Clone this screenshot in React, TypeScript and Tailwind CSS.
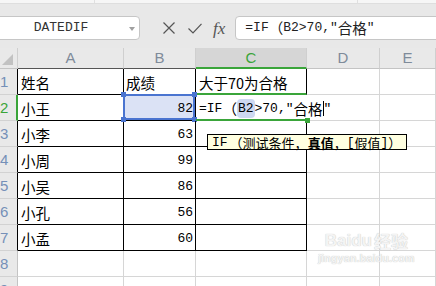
import React from "react"

const rows = [
  ["姓名", "成绩", "大于70为合格"],
  ["小王", "82", ""],
  ["小李", "63", ""],
  ["小周", "99", ""],
  ["小吴", "86", ""],
  ["小孔", "56", ""],
  ["小孟", "60", ""],
  ["", "", ""],
  ["", "", ""],
]

const mono = "font-['Liberation_Mono','DejaVu_Sans_Mono','Noto_Sans_CJK_SC',monospace]"
const cjk = "font-['Noto_Sans_CJK_SC',sans-serif]"

const App = () => {
  return (
    <div className="relative h-[286px] w-[436px] overflow-hidden bg-white font-['Liberation_Sans',sans-serif]">
      {/* top strip */}
      <div className="flex h-[4px] border-b border-b-[#dedede] bg-[#f6f6f6]">
        <div className="w-[95px] border-r border-r-[#e0e0e0]" />
        <div className="w-[263px] border-r border-r-[#e0e0e0]" />
      </div>

      {/* formula bar */}
      <div className="flex h-[44px] items-start bg-[#e8e8e8] pt-[12px]">
        <div className="relative -ml-[4px] flex h-[24px] w-[144px] items-center justify-center rounded-[4px] border border-[#c6c6c6] bg-white">
          <span className={"-ml-[14px] text-[13px] text-[#333] " + mono}>DATEDIF</span>
          <svg className="absolute right-[4px] top-[10px]" width="6" height="4" viewBox="0 0 6 4">
            <path d="M0 0h6L3 4z" fill="#a0a0a0" />
          </svg>
        </div>
        <div className="ml-[23px] flex h-[24px] items-center">
          <svg width="12" height="12" viewBox="0 0 12 12">
            <path d="M0.5 0.5L11.5 11.5M11.5 0.5L0.5 11.5" stroke="#555" strokeWidth="1.2" fill="none" />
          </svg>
        </div>
        <div className="ml-[13px] flex h-[24px] items-center">
          <svg width="14" height="11" viewBox="0 0 14 11">
            <path d="M0.5 5.5L5 10L13.5 0.8" stroke="#555" strokeWidth="1.2" fill="none" />
          </svg>
        </div>
        <div className="ml-[11px] flex h-[24px] items-center">
          <span className="font-['Liberation_Serif',serif] text-[17px] italic leading-none text-[#555]">fx</span>
        </div>
        <div className={"-mr-[4px] ml-[10px] flex h-[24px] flex-1 items-center rounded-[4px] border border-[#c6c6c6] bg-white pl-[9px] text-[13px] text-[#222] " + mono}>
          <span>=IF</span>
          <span className={"text-[14.5px] " + cjk}>（</span>
          <span>B2&gt;70,″</span>
          <span className={"text-[14.5px] " + cjk}>合格</span>
          <span>″</span>
        </div>
      </div>

      {/* sheet */}
      <div className="grid grid-cols-[18px_106px_72px_111px_73px_56px] grid-rows-[21px_repeat(9,26px)]">
        {/* header row */}
        <div className="relative border-r border-b border-r-[#cfcfcf] border-b-[#c4c4c4] bg-[#e9e9e9]">
          <svg className="absolute left-[2px] top-[6px]" width="11" height="11" viewBox="0 0 11 11">
            <path d="M11 0V11H0z" fill="#c2c2c2" />
          </svg>
        </div>
        <div className="flex items-center justify-center border-r border-b border-r-[#cfcfcf] border-b-[#555] bg-[#e9e9e9] text-[15px] text-[#7f8b9a]">A</div>
        <div className="flex items-center justify-center border-r border-b border-r-[#cfcfcf] border-b-[#555] bg-[#e9e9e9] text-[15px] text-[#7f8b9a]">B</div>
        <div className="flex items-center justify-center border-r border-b-2 border-r-[#cfcfcf] border-b-[#3aa53a] bg-[#d6d6d6] pt-[2px] text-[15px] text-[#3aa53a]">C</div>
        <div className="flex items-center justify-center border-r border-b border-r-[#cfcfcf] border-b-[#c4c4c4] bg-[#e9e9e9] text-[15px] text-[#7f8b9a]">D</div>
        <div className="flex items-center justify-center border-r border-b border-r-[#cfcfcf] border-b-[#c4c4c4] bg-[#e9e9e9] text-[15px] text-[#7f8b9a]">E</div>

        {rows.map((row, i) => {
          const r = i + 1
          const inBlock = r <= 7
          const headCls =
            r === 2
              ? "border-r-2 border-b border-r-[#3aa53a] border-b-[#d2d2d2] text-[#3aa53a]"
              : inBlock
                ? "border-r border-b border-r-black border-b-[#d2d2d2] text-[#7590b8]"
                : "border-r border-b border-r-[#c4c4c4] border-b-[#d2d2d2] text-[#7590b8]"
          const blockCls = inBlock
            ? "border-r border-b border-r-black border-b-black"
            : "border-r border-b border-r-[#d6d6d6] border-b-[#d6d6d6]"
          let cCls = blockCls
          if (r === 1) cCls = "border-r border-b-2 border-r-black border-b-[#3aa53a]"
          if (r === 2) cCls = "relative z-10 border-b-2 border-b-[#3aa53a]"
          return (
            <React.Fragment key={r}>
              <div className={"flex items-center bg-[#e9e9e9] pt-[2px] text-[15px] " + headCls}>
                <span className="ml-0">{r}</span>
              </div>
              <div className={"flex items-center pl-[3px] pt-[3px] text-[14.5px] text-black " + cjk + " " + blockCls}>
                {row[0]}
              </div>
              <div
                className={
                  "relative flex items-center pt-[3px] text-black " +
                  (r === 1 ? "pl-[2px] text-[14.5px] " + cjk : "justify-end pr-[2px] text-[13px] " + mono) +
                  " " +
                  blockCls +
                  (r === 2 ? " bg-[#dbe2f5]" : "")
                }
              >
                {row[1]}
                {r === 2 && (
                  <>
                    <div className="absolute -top-[1px] -left-[1px] right-0 bottom-0 border-2 border-[#4a74d0]" />
                    <div className="absolute -top-[3px] -left-[3px] h-[5px] w-[5px] bg-[#4a74d0]" />
                    <div className="absolute -top-[3px] -right-[2px] h-[5px] w-[5px] bg-[#4a74d0]" />
                    <div className="absolute -bottom-[2px] -left-[3px] h-[5px] w-[5px] bg-[#4a74d0]" />
                    <div className="absolute -bottom-[2px] -right-[2px] h-[5px] w-[5px] bg-[#4a74d0]" />
                  </>
                )}
              </div>
              <div className={"flex items-center pl-[3px] pt-[3px] text-[14.5px] text-black " + cjk + " " + cCls}>
                {r === 2 ? (
                  <>
                    <span className={"flex items-center whitespace-nowrap bg-white pr-[2px] text-[13px] " + mono}>
                      <span>=IF</span>
                      <span className={"text-[14.5px] " + cjk}>（</span>
                      <span className="rounded-[4px] bg-[#cdd8f1] px-[1px]">B2</span>
                      <span>&gt;70,″</span>
                      <span className={"text-[14.5px] " + cjk}>合格</span>
                      <span className="h-[15px] w-px bg-black" />
                      <span>″</span>
                    </span>
                    <div className="absolute -bottom-[4px] -right-[3px] h-[5px] w-[5px] bg-[#3aa53a]" />
                  </>
                ) : (
                  row[2]
                )}
              </div>
              <div className="border-r border-b border-r-[#d6d6d6] border-b-[#d6d6d6]" />
              <div className="border-r border-b border-r-[#d6d6d6] border-b-[#d6d6d6]" />
            </React.Fragment>
          )
        })}
      </div>

      {/* function hint */}
      <div className={"absolute left-[207px] top-[134px] flex h-[16px] items-center whitespace-nowrap border border-black bg-[#ffffe1] pl-[4px] pr-[5px] text-[13px] leading-none text-black " + mono}>
        <span>IF</span>
        <span className={"ml-[2px] " + cjk}>（测试条件，</span>
        <span className={"font-bold " + cjk}>真值</span>
        <span className={cjk}>，</span>
        <span>[</span>
        <span className={cjk}>假值</span>
        <span>]</span>
        <span className={cjk}>）</span>
      </div>

      {/* watermark */}
      <div className="pointer-events-none absolute left-[318px] top-[232px] flex flex-col items-center text-[#f4f4f4] [text-shadow:0_0_1px_#b8b8b8]">
        <div className={"flex items-end text-[17px] font-bold leading-none " + cjk}>
          <span className="font-['Liberation_Sans',sans-serif]">Bai</span>
          <span className="font-['Liberation_Sans',sans-serif]">du</span>
          <span className="ml-[2px]">经验</span>
        </div>
        <div className="mt-[4px] text-[11px] font-bold leading-none">jingyan.baidu.com</div>
      </div>
    </div>
  )
}

export default App
